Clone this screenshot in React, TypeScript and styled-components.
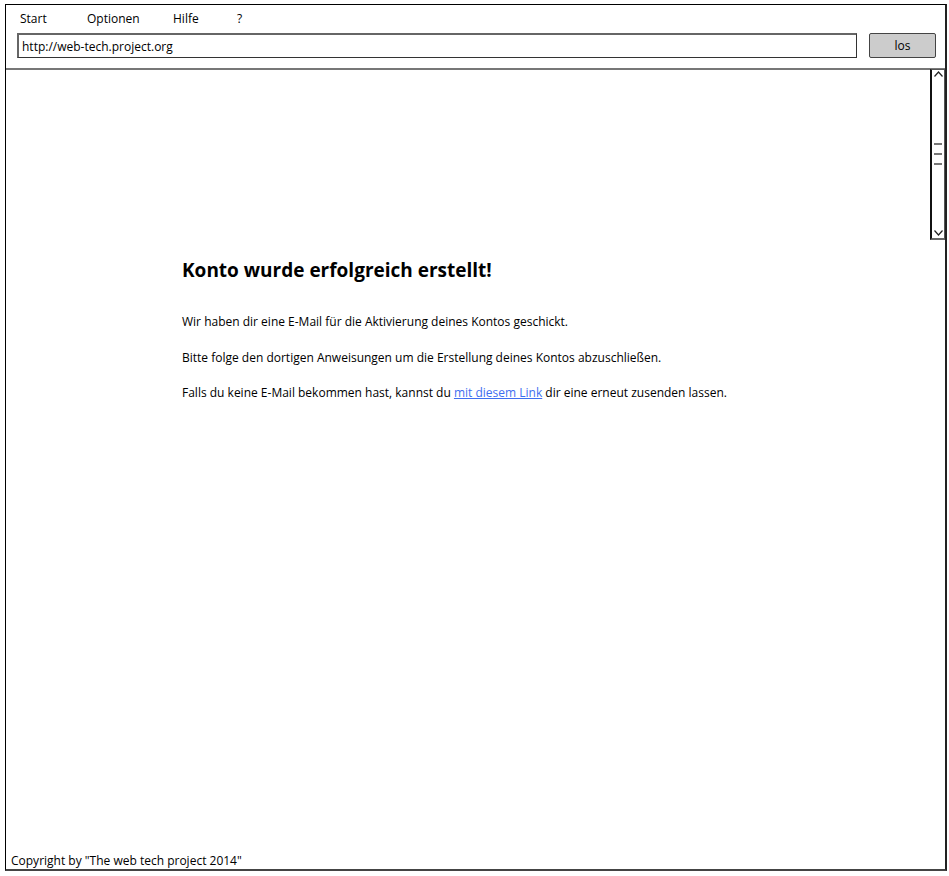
import React from "react";
import styled, { createGlobalStyle } from "styled-components";

const Global = createGlobalStyle`
  html, body { margin: 0; padding: 0; background: #fff; }
  body { font-family: "Comic Sans MS", "Open Sans", sans-serif; color: #000; }
`;

const Frame = styled.div`
  position: relative;
  margin: 4px 0 0 5px;
  width: 942px;
  height: 867px;
  border: 1px solid #000;
  border-right: 2px solid #222;
  border-bottom: 2px solid #444;
  box-sizing: border-box;
  display: flex;
  flex-direction: column;
  background: #fff;
`;

const Header = styled.div`
  display: flex;
  flex-direction: column;
  padding: 5px 8px 0 11px;
  height: 65px;
  box-sizing: border-box;
  border-bottom: 2px solid #777;
`;

const Menu = styled.div`
  display: flex;
  height: 17px;
  align-items: center;
  padding-left: 3px;
  font-size: 12px;
`;

const MenuItem = styled.span<{ $w: number }>`
  width: ${(p) => p.$w}px;
`;

const AddressRow = styled.div`
  display: flex;
  gap: 12px;
  margin-top: 6px;
`;

const Address = styled.div`
  flex: 0 0 840px;
  height: 25px;
  box-sizing: border-box;
  border-style: solid;
  border-color: #666 #333 #333 #666;
  border-width: 2px 1px 1px 2px;
  display: flex;
  align-items: center;
  padding-left: 3px;
  font-size: 12px;
`;

const Go = styled.div`
  flex: 0 0 67px;
  height: 25px;
  box-sizing: border-box;
  background: #cccccc;
  border: 1px solid #444;
  border-radius: 2px;
  display: flex;
  align-items: center;
  justify-content: center;
  font-size: 12px;
`;

const Body = styled.div`
  flex: 1;
  display: flex;
  flex-direction: column;
  position: relative;
`;

const Scroll = styled.div`
  position: absolute;
  right: 0;
  top: -1px;
  width: 15px;
  height: 171px;
  box-sizing: border-box;
  border: 1px solid #555;
  border-left: 2px solid #111;
  border-bottom: 2px solid #666;
  display: flex;
  flex-direction: column;
  align-items: center;
  justify-content: space-between;
  padding: 1px 0 2px;
`;

const Grip = styled.div`
  display: flex;
  flex-direction: column;
  gap: 8px;
`;

const GripLine = styled.div`
  width: 8px;
  height: 2px;
  background: #777;
`;

const Content = styled.div`
  padding: 187px 0 0 176px;
`;

const Title = styled.h1`
  margin: 0 0 30px;
  font-size: 19px;
  font-weight: bold;
`;

const Para = styled.p`
  margin: 0 0 18.5px;
  font-size: 12px;
  line-height: 17px;
`;

const Link = styled.a`
  color: #3f6ff0;
  text-decoration: underline;
`;

const Footer = styled.div`
  margin-top: auto;
  padding: 0 0 0 5px;
  font-size: 12px;
  height: 16px;
  line-height: 16px;
`;

const Chevron = ({ up }: { up?: boolean }) => (
  <svg width="9" height="6" viewBox="0 0 9 6">
    <path
      d={up ? "M0.5 5.5 L4.5 1 L8.5 5.5" : "M0.5 0.5 L4.5 5 L8.5 0.5"}
      fill="none"
      stroke="#222"
      strokeWidth="1.2"
    />
  </svg>
);

export default function App() {
  return (
    <>
      <Global />
      <Frame>
        <Header>
          <Menu>
            <MenuItem $w={67}>Start</MenuItem>
            <MenuItem $w={86}>Optionen</MenuItem>
            <MenuItem $w={64}>Hilfe</MenuItem>
            <MenuItem $w={20}>?</MenuItem>
          </Menu>
          <AddressRow>
            <Address>http://web-tech.project.org</Address>
            <Go>los</Go>
          </AddressRow>
        </Header>
        <Body>
          <Scroll>
            <Chevron up />
            <Grip>
              <GripLine />
              <GripLine />
              <GripLine />
            </Grip>
            <Chevron />
          </Scroll>
          <Content>
            <Title>Konto wurde erfolgreich erstellt!</Title>
            <Para>Wir haben dir eine E-Mail für die Aktivierung deines Kontos geschickt.</Para>
            <Para>Bitte folge den dortigen Anweisungen um die Erstellung deines Kontos abzuschließen.</Para>
            <Para>
              Falls du keine E-Mail bekommen hast, kannst du <Link href="#">mit diesem Link</Link> dir eine erneut zusenden lassen.
            </Para>
          </Content>
          <Footer>Copyright by "The web tech project 2014"</Footer>
        </Body>
      </Frame>
    </>
  );
}
